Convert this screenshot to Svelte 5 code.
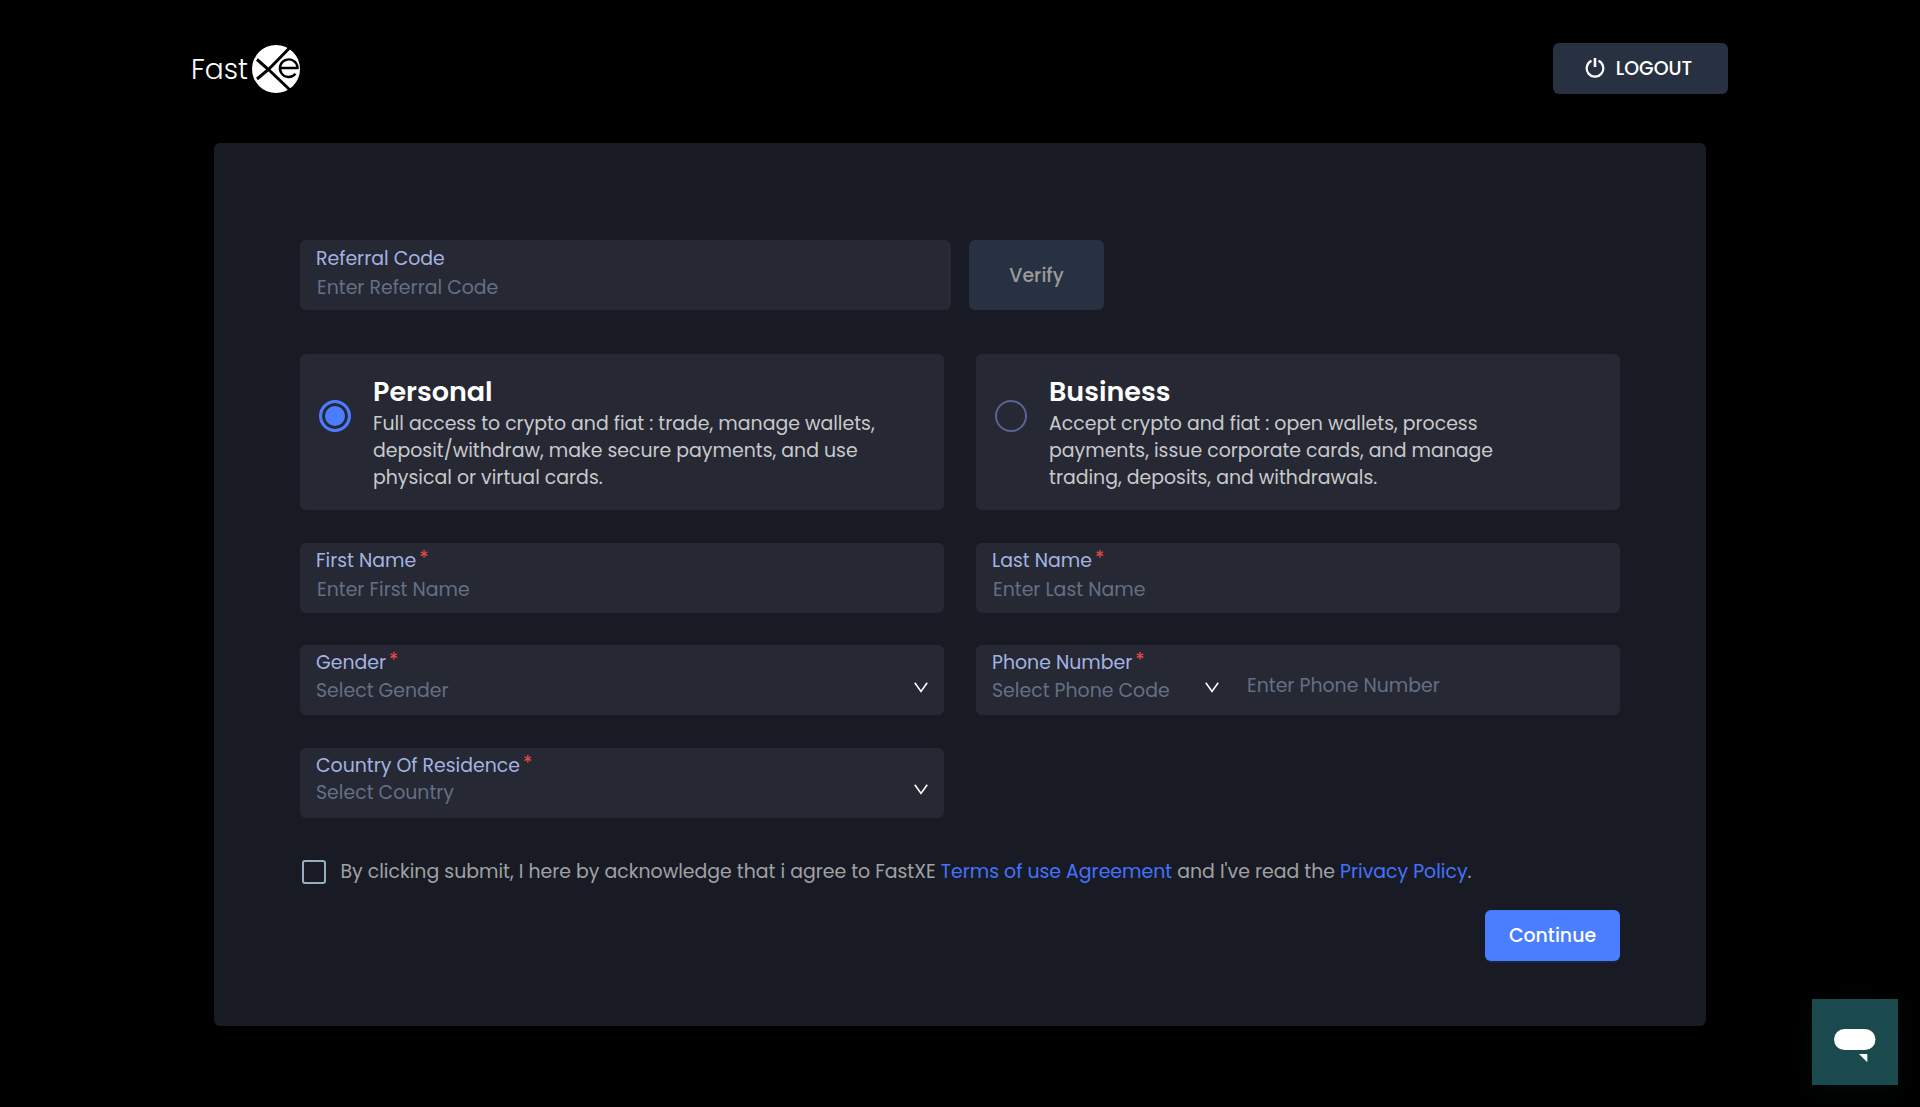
<script lang="ts">
  const accountTypes = [
    {
      id: 'personal',
      title: 'Personal',
      text: 'Full access to crypto and fiat : trade, manage wallets, deposit/withdraw, make secure payments, and use physical or virtual cards.',
    },
    {
      id: 'business',
      title: 'Business',
      text: 'Accept crypto and fiat : open wallets, process payments, issue corporate cards, and manage trading, deposits, and withdrawals.',
    },
  ];

  let accountType = $state('personal');
  let referralCode = $state('');
  let firstName = $state('');
  let lastName = $state('');
  let phoneNumber = $state('');
  let agreed = $state(false);
</script>

{#snippet label(text: string)}
  <span class="label">{text}<span class="required">*</span></span>
{/snippet}

{#snippet chevron()}
  <svg class="chevron" width="14" height="11" viewBox="0 0 14 11" fill="none">
    <path d="M0.8 0.8 7 9.4 13.2 0.8" stroke="#fff" stroke-width="1.6" />
  </svg>
{/snippet}

<header class="topbar">
  <div class="logo">
    <span class="logo-text">Fast</span>
    <svg width="48" height="48" viewBox="0 0 48 48" fill="none">
      <circle cx="24" cy="24" r="24" fill="#fff" />
      <path d="M5 14.500 16.500 24.500 37.500 44.500M5 34 16.500 24.500 37.500 3" stroke="#000" stroke-width="3" />
      <circle cx="36.500" cy="23" r="10.300" fill="#fff" />
      <path d="M28 23H45.500A8.800 8.800 0 1 0 43.500 28.800" stroke="#000" stroke-width="2.400" />
    </svg>
  </div>
  <button class="logout">
    <svg width="20" height="20" viewBox="0 0 20 20" fill="none" stroke="#fff" stroke-width="2.200">
      <path d="M6.500 2.800A8.300 8.300 0 1 0 13.500 2.800" />
      <path d="M10 0V9" stroke-width="2.600" />
    </svg>
    LOGOUT
  </button>
</header>

<main class="card">
  <div class="referral">
    <label class="field">
      <span class="label">Referral Code</span>
      <input placeholder="Enter Referral Code" bind:value={referralCode} />
    </label>
    <button class="verify" disabled>Verify</button>
  </div>

  <div class="grid">
    {#each accountTypes as type}
      <button class="account" onclick={() => (accountType = type.id)}>
        <span class="radio" class:checked={accountType === type.id}></span>
        <span class="account-body">
          <span class="account-title">{type.title}</span>
          <span class="account-text">{type.text}</span>
        </span>
      </button>
    {/each}

    <label class="field">
      {@render label('First Name')}
      <input placeholder="Enter First Name" bind:value={firstName} />
    </label>
    <label class="field">
      {@render label('Last Name')}
      <input placeholder="Enter Last Name" bind:value={lastName} />
    </label>

    <div class="field">
      {@render label('Gender')}
      <div class="select"><span>Select Gender</span>{@render chevron()}</div>
    </div>
    <div class="field">
      {@render label('Phone Number')}
      <div class="phone">
        <div class="select code"><span>Select Phone Code</span>{@render chevron()}</div>
        <input class="number" placeholder="Enter Phone Number" bind:value={phoneNumber} />
      </div>
    </div>

    <div class="field">
      {@render label('Country Of Residence')}
      <div class="select"><span>Select Country</span>{@render chevron()}</div>
    </div>
  </div>

  <label class="terms">
    <input type="checkbox" bind:checked={agreed} />
    <span class="terms-text">
      By clicking submit, I here by acknowledge that i agree to FastXE
      <a href="#terms">Terms of use Agreement</a> and I've read the <a href="#privacy">Privacy Policy</a>.
    </span>
  </label>

  <div class="actions">
    <button class="continue">Continue</button>
  </div>
</main>

<button class="chat" aria-label="Chat">
  <svg width="42" height="34" viewBox="0 0 42 34" fill="#fff">
    <rect width="41.500" height="21" rx="10.500" />
    <path d="M25 25H33.300V33.300Z" />
  </svg>
</button>

<style>
  :global(body) {
    background: #000;
    font-family: Poppins, Inter, sans-serif;
    font-size: 18.9px;
    overflow: hidden;
  }

  button,
  input {
    font: inherit;
    letter-spacing: inherit;
    border: 0;
    padding: 0;
    margin: 0;
  }

  .topbar {
    display: flex;
    justify-content: space-between;
    align-items: center;
    box-sizing: border-box;
    height: 143px;
    padding: 0 192px 6px 191px;
  }

  .logo {
    display: flex;
    align-items: center;
    gap: 4px;
  }

  .logo-text {
    padding-top: 3px;
    color: #fff;
    font-size: 28px;
    font-weight: 300;
  }

  .logout {
    display: flex;
    align-items: center;
    justify-content: center;
    gap: 11px;
    width: 175px;
    height: 51px;
    padding-right: 4px;
    border-radius: 6px;
    background: #283141;
    color: #fff;
    font-weight: 500;
  }

  .logout svg {
    margin-bottom: 2px;
  }

  .card {
    box-sizing: border-box;
    width: 1492px;
    height: 883px;
    margin: 0 auto;
    padding: 97px 86px 0;
    border-radius: 6px;
    background: #191b24;
  }

  .referral {
    display: grid;
    grid-template-columns: 651px 135px;
    gap: 18px;
    margin-bottom: 44px;
  }

  .referral .field {
    padding-top: 8px;
  }

  .referral .field input {
    margin-top: 6px;
  }

  .verify {
    border-radius: 6px;
    background: #283141;
    color: #9b9b9b;
    font-weight: 500;
  }

  .grid {
    display: grid;
    grid-template-columns: repeat(2, minmax(0, 1fr));
    gap: 32.6px 32px;
  }

  .account {
    display: flex;
    box-sizing: border-box;
    height: 156px;
    padding: 18px 19px;
    gap: 22px;
    border-radius: 6px;
    background: #262833;
    text-align: left;
  }

  .radio {
    box-sizing: border-box;
    flex: none;
    width: 32px;
    height: 32px;
    margin-top: 28px;
    border: 2px solid #5a6596;
    border-radius: 50%;
  }

  .radio.checked {
    border: 3px solid #4a7dff;
    background: #4a7dff;
    box-shadow: inset 0 0 0 3px #262833;
  }

  .account-body {
    display: flex;
    flex-direction: column;
    width: 520px;
  }

  .account-title {
    padding-top: 1px;
    color: #fff;
    font-size: 27px;
    font-weight: 600;
    line-height: 37px;
  }

  .account-text {
    color: #c8cacd;
    line-height: 27px;
  }

  .field {
    display: block;
    box-sizing: border-box;
    height: 70px;
    padding: 7.2px 16px 0;
    border-radius: 6px;
    background: #262833;
  }

  .label {
    display: block;
    color: #a3b4e2;
    line-height: 22px;
  }

  .required {
    position: relative;
    top: -2px;
    margin-left: 3px;
    color: #f04848;
  }

  .field input {
    display: block;
    box-sizing: border-box;
    width: 100%;
    height: 22px;
    margin-top: 7px;
    padding-left: 1px;
    background: transparent;
    color: #fff;
    outline: none;
  }

  .field input::placeholder {
    color: #647086;
    opacity: 1;
  }

  .select {
    display: flex;
    justify-content: space-between;
    margin-top: 5.4px;
    color: #647086;
    line-height: 22px;
  }

  .chevron {
    margin-top: 2px;
  }

  .phone {
    display: flex;
    gap: 27px;
  }

  .code {
    flex: none;
    width: 227px;
  }

  .phone .number {
    flex: 1;
    width: auto;
    min-width: 0;
    margin-top: 0;
  }

  .terms {
    display: flex;
    align-items: center;
    gap: 15px;
    height: 27px;
    margin-top: 41px;
    padding-left: 1.5px;
    color: #a0a2a5;
  }

  .terms-text {
    padding-bottom: 1px;
  }

  .terms input {
    appearance: none;
    box-sizing: border-box;
    width: 24px;
    height: 24px;
    border: 2px solid #94afc2;
    border-radius: 3px;
  }

  .terms a {
    color: #4472ff;
    text-decoration: none;
  }

  .actions {
    display: flex;
    justify-content: flex-end;
    margin-top: 24px;
  }

  .continue {
    width: 135px;
    height: 51px;
    border-radius: 6px;
    background: #4a7dff;
    box-shadow: 0 2px 0 #162440;
    color: #fff;
    font-weight: 500;
  }

  .chat {
    position: fixed;
    right: 22px;
    bottom: 22px;
    display: flex;
    align-items: flex-start;
    justify-content: center;
    width: 86px;
    height: 86px;
    padding-top: 30px;
    box-sizing: border-box;
    background: #1a4a4d;
    box-shadow: 0 4px 24px rgba(26, 74, 77, 0.15);
  }
</style>
